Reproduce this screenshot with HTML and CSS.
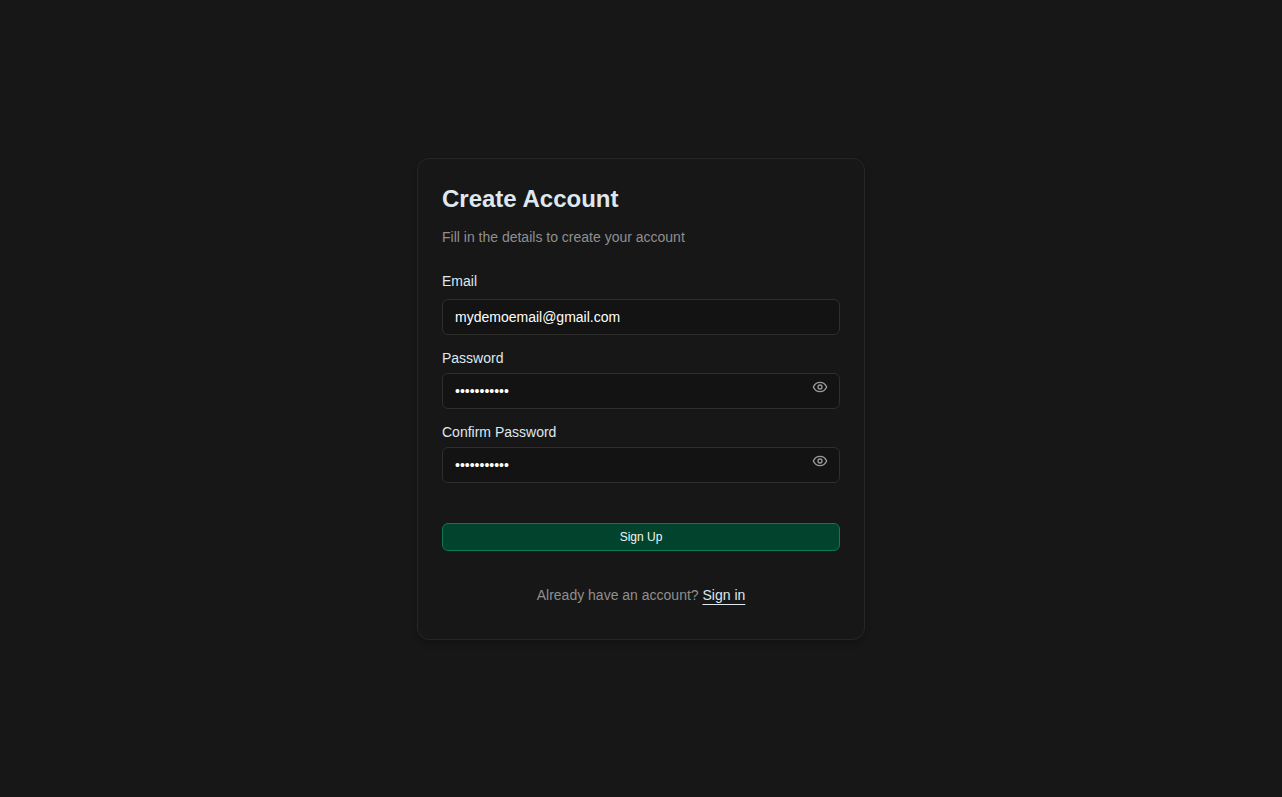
FILE: index.html
```html
<!DOCTYPE html>
<html lang="en">
<head>
<meta charset="UTF-8">
<meta name="viewport" content="width=device-width, initial-scale=1.0">
<title>Create Account</title>
<link rel="stylesheet" href="styles.css">
</head>
<body>
<main class="card">
  <h1>Create Account</h1>
  <p class="description">Fill in the details to create your account</p>

  <form class="signup-form">
    <div class="field field-email">
      <label for="email">Email</label>
      <input type="email" id="email" value="mydemoemail@gmail.com" autocomplete="email">
    </div>

    <div class="field">
      <label for="password">Password</label>
      <div class="password-box">
        <input type="password" id="password" value="demopass123" autocomplete="new-password">
        <button type="button" class="toggle" data-target="password" aria-label="Show password">
          <svg width="16" height="16" viewBox="0 0 24 24" fill="none" stroke="currentColor" stroke-width="2" stroke-linecap="round" stroke-linejoin="round">
            <path d="M2 12s3-7 10-7 10 7 10 7-3 7-10 7-10-7-10-7Z"/>
            <circle cx="12" cy="12" r="3"/>
          </svg>
        </button>
      </div>
    </div>

    <div class="field">
      <label for="confirm-password">Confirm Password</label>
      <div class="password-box">
        <input type="password" id="confirm-password" value="demopass123" autocomplete="new-password">
        <button type="button" class="toggle" data-target="confirm-password" aria-label="Show password">
          <svg width="16" height="16" viewBox="0 0 24 24" fill="none" stroke="currentColor" stroke-width="2" stroke-linecap="round" stroke-linejoin="round">
            <path d="M2 12s3-7 10-7 10 7 10 7-3 7-10 7-10-7-10-7Z"/>
            <circle cx="12" cy="12" r="3"/>
          </svg>
        </button>
      </div>
    </div>

    <button type="submit" class="submit">Sign Up</button>
  </form>

  <p class="footer">Already have an account? <a href="#signin">Sign in</a></p>
</main>

<script>
// Show or hide the password next to the clicked eye
document.querySelectorAll('.toggle').forEach(button => {
  button.addEventListener('click', function() {
    const input = document.getElementById(this.dataset.target);
    input.type = input.type === 'password' ? 'text' : 'password';
  });
});
</script>
</body>
</html>
```

FILE: styles.css
```css
* {
  box-sizing: border-box;
}
body {
  margin: 0;
  min-height: 100vh;
  display: flex;
  align-items: center;
  justify-content: center;
  background-color: #171717;
  color: #dfe7ef;
  font-family: Helvetica, "Liberation Sans", Arial, sans-serif;
  font-size: 14px;
  line-height: 20px;
}
.card {
  width: 100%;
  max-width: 448px;
  padding: 24px;
  border: 1px solid #262626;
  border-radius: 12px;
  background-color: #171717;
  box-shadow: 0 4px 6px rgba(0, 0, 0, 0.2);
}
h1 {
  margin: 0 0 12px;
  font-size: 24px;
  line-height: 32px;
}
.description {
  margin: 0 0 24px;
  color: #8f8f8f;
}
.signup-form {
  display: flex;
  flex-direction: column;
  gap: 13px;
}
.field {
  display: flex;
  flex-direction: column;
  gap: 5px;
}
.field-email {
  gap: 8px;
}
.field input {
  width: 100%;
  height: 36px;
  padding: 0 12px;
  border: 1px solid #2e2e2c;
  border-radius: 6px;
  background-color: #131313;
  color: #fff;
  font: inherit;
  outline: none;
}
.field input:focus {
  border-color: #0c7a53;
}
.password-box {
  position: relative;
}
.password-box input {
  display: block;
  padding-right: 36px;
}
.toggle {
  position: absolute;
  top: 6px;
  right: 12px;
  padding: 0;
  border: none;
  background: none;
  color: #9a9a9a;
  cursor: pointer;
}
.toggle svg {
  display: block;
}
.submit {
  height: 28px;
  margin-top: 27px;
  border: 1px solid #0b7a53;
  border-radius: 6px;
  background-color: #02432d;
  color: #f0f5f3;
  font-family: inherit;
  font-size: 12px;
  cursor: pointer;
}
.footer {
  margin: 24px 0 0;
  padding: 10px 0;
  text-align: center;
  color: #8f8f8f;
}
.footer a {
  color: #dfe7ef;
  text-decoration: underline;
  text-underline-offset: 4px;
}
```
